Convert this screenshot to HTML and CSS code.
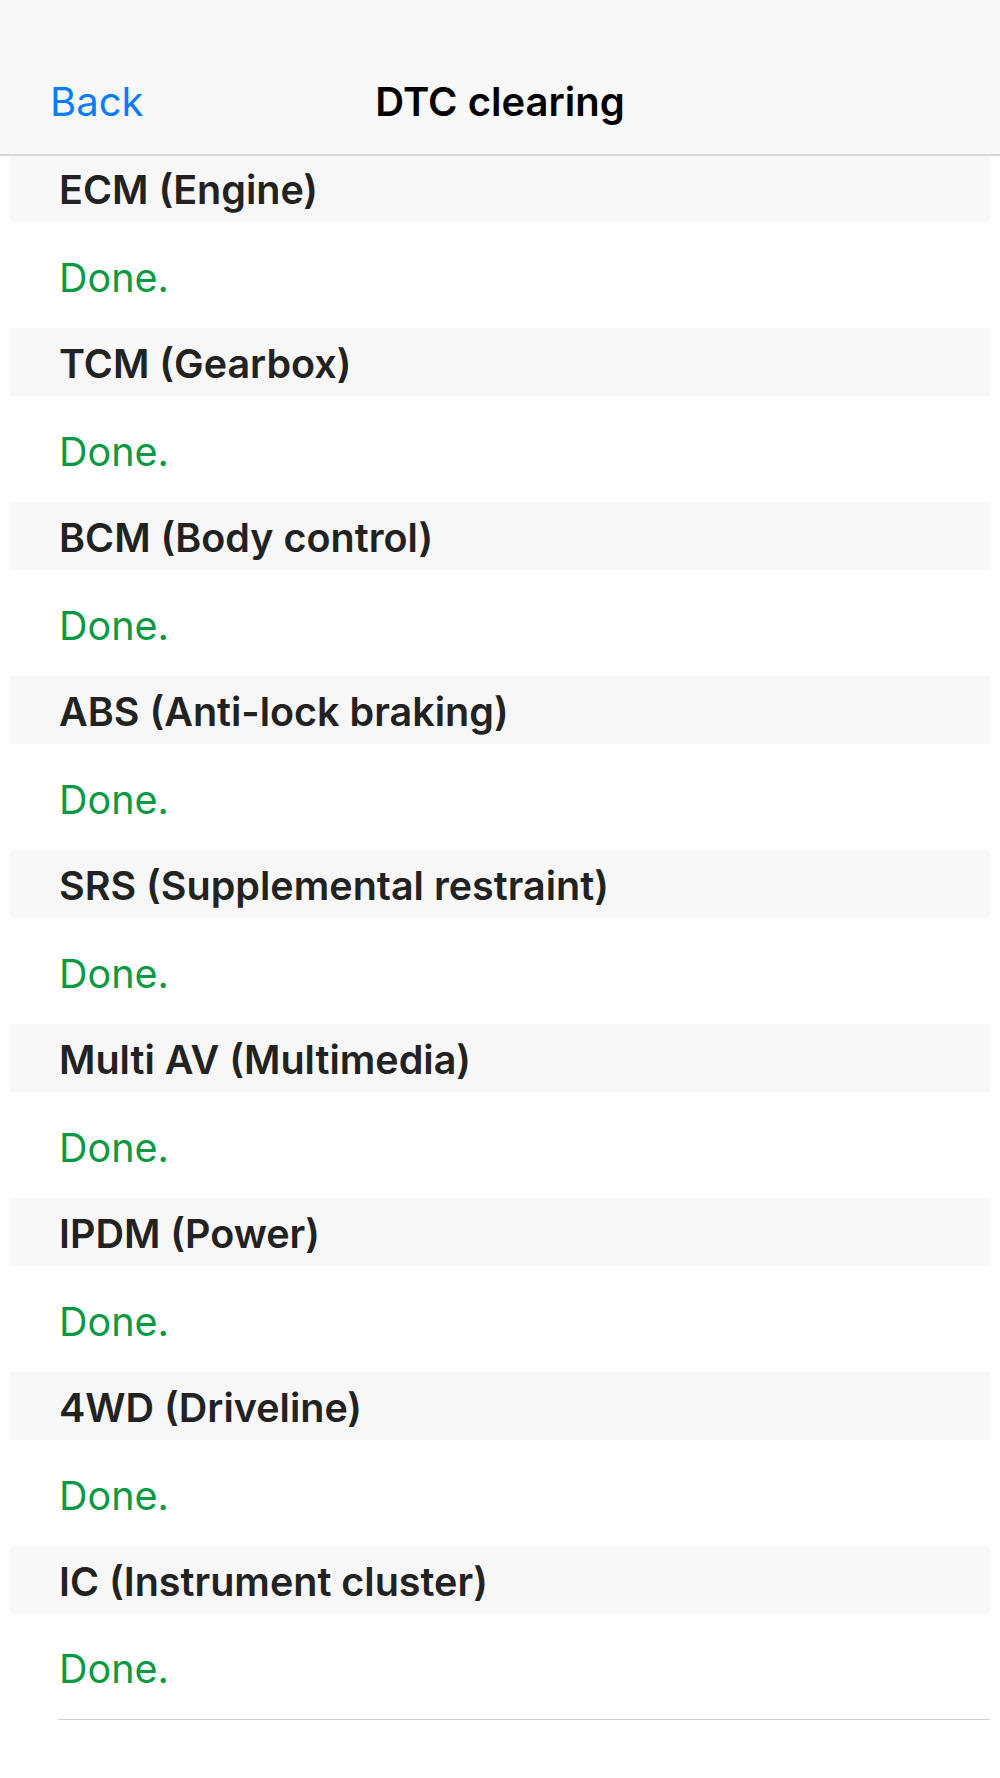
FILE: index.html
```html
<!DOCTYPE html>
<html>
<head>
<meta charset="utf-8">
<link rel="stylesheet" href="styles.css">
</head>
<body>
<header class="nav">
  <span class="nav-back">Back</span>
  <span class="nav-title">DTC clearing</span>
</header>
<main class="list">
  <section class="group"><div class="group-head">ECM (Engine)</div><div class="row">Done.</div></section>
  <section class="group"><div class="group-head">TCM (Gearbox)</div><div class="row">Done.</div></section>
  <section class="group"><div class="group-head">BCM (Body control)</div><div class="row">Done.</div></section>
  <section class="group"><div class="group-head">ABS (Anti-lock braking)</div><div class="row">Done.</div></section>
  <section class="group"><div class="group-head">SRS (Supplemental restraint)</div><div class="row">Done.</div></section>
  <section class="group"><div class="group-head">Multi AV (Multimedia)</div><div class="row">Done.</div></section>
  <section class="group"><div class="group-head">IPDM (Power)</div><div class="row">Done.</div></section>
  <section class="group"><div class="group-head">4WD (Driveline)</div><div class="row">Done.</div></section>
  <section class="group"><div class="group-head">IC (Instrument cluster)</div><div class="row row-last">Done.</div></section>
</main>
</body>
</html>
```

FILE: styles.css
```css
html, body {
  margin: 0;
  padding: 0;
  background: #ffffff;
  font-family: "Inter", "Roboto", "Liberation Sans", sans-serif;
}

.nav {
  position: sticky;
  top: 0;
  z-index: 2;
  background: #f8f8f8;
  border-bottom: 2px solid #d6d6d6;
  display: flex;
  align-items: flex-end;
  justify-content: center;
  padding-bottom: 28px;
  box-sizing: content-box;
  height: 126px;
}

.nav-back {
  position: absolute;
  left: 50px;
  bottom: 28px;
  color: #0a7cff;
  font-size: 40px;
  line-height: 48px;
  font-weight: 400;
}

.nav-title {
  color: #000;
  font-size: 40px;
  line-height: 48px;
  font-weight: 600;
}

.list {
  margin-top: -2px;
  padding: 0 10px;
}

.group-head {
  height: 68px;
  box-sizing: border-box;
  padding-top: 4px;
  background: #f7f7f7;
  display: flex;
  align-items: center;
  padding-left: 49px;
  color: #222;
  font-size: 39.5px;
  font-weight: 600;
}

.row {
  height: 106px;
  display: flex;
  align-items: center;
  padding-left: 49px;
  color: #0a9a42;
  font-size: 39.5px;
  font-weight: 400;
  box-sizing: border-box;
  padding-top: 5px;
}

.row-last {
  margin-left: 48px;
  padding-left: 1px;
  border-bottom: 1px solid #cfcfcf;
}
```
